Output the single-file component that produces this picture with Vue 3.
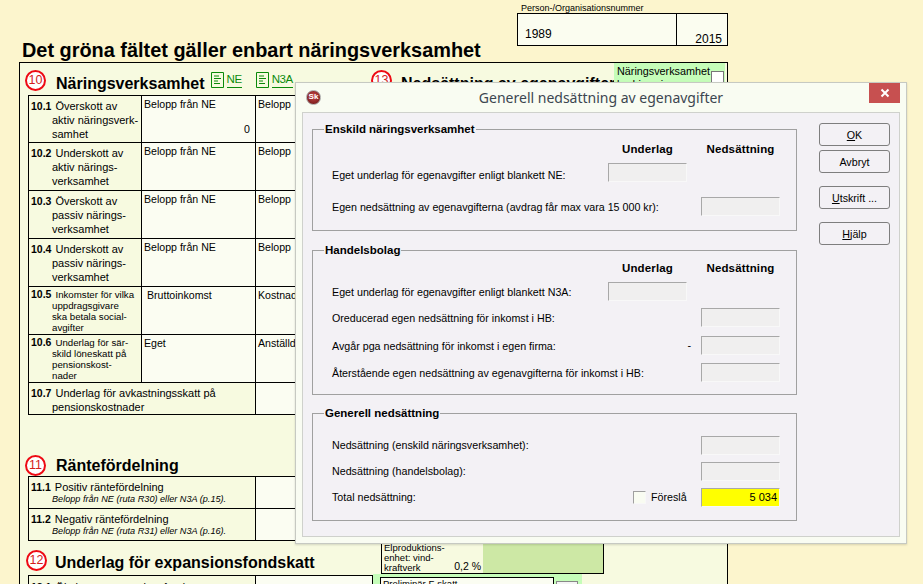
<script setup>
const rows = [
  { n: '10.1', lines: ['Överskott av', 'aktiv näringsverk-', 'samhet'], a: 'Belopp från NE', b: 'Belopp', v: '0', h: 47 },
  { n: '10.2', lines: ['Underskott av', 'aktiv närings-', 'verksamhet'], a: 'Belopp från NE', b: 'Belopp', h: 48 },
  { n: '10.3', lines: ['Överskott av', 'passiv närings-', 'verksamhet'], a: 'Belopp från NE', b: 'Belopp', h: 48 },
  { n: '10.4', lines: ['Underskott av', 'passiv närings-', 'verksamhet'], a: 'Belopp från NE', b: 'Belopp', h: 48 },
  { n: '10.5', small: true, lines: ['Inkomster för vilka', 'uppdragsgivare', 'ska betala social-', 'avgifter'], a: 'Bruttoinkomst', b: 'Kostnad', ind: true, h: 48 },
  { n: '10.6', small: true, lines: ['Underlag för sär-', 'skild löneskatt på', 'pensionskost-', 'nader'], a: 'Eget', b: 'Anställd', h: 48 }
]
const hb = [
  { t: 'Eget underlag för egenavgifter enligt blankett N3A:', col: 1 },
  { t: 'Oreducerad egen nedsättning för inkomst i HB:', col: 2 },
  { t: 'Avgår pga nedsättning för inkomst i egen firma:', col: 2, minus: true },
  { t: 'Återstående egen nedsättning av egenavgifterna för inkomst i HB:', col: 2 }
]
</script>

<template>
  <div class="page">
    <div class="top">
      <h1>Det gröna fältet gäller enbart näringsverksamhet</h1>
      <div class="pnr">
        <div class="pnr-label">Person-/Organisationsnummer</div>
        <div class="pnr-box"><span class="pnr-no">1989</span><span class="pnr-year">2015</span></div>
      </div>
    </div>

    <div class="form">
      <div class="left">
        <div class="head h10">
          <span class="circle">10</span>
          <h2>Näringsverksamhet</h2>
          <span class="doc"><svg width="13" height="16" viewBox="0 0 13 16"><path d="M.5.5h12v15H.5zM3 4h5M3 6.500h7M3 9h4M3 11.500h6" fill="none" stroke="#0a8a0a"/></svg><u>NE</u></span>
          <span class="doc n3a"><svg width="13" height="16" viewBox="0 0 13 16"><path d="M.5.5h12v15H.5zM3 4h5M3 6.500h7M3 9h4M3 11.500h6" fill="none" stroke="#0a8a0a"/></svg><u>N3A</u></span>
        </div>
        <div class="tbl t10">
          <div v-for="r in rows" :key="r.n" class="row" :style="{ height: r.h + 'px' }">
            <div class="lab" :class="{ small: r.small }">
              <b>{{ r.n }}</b>
              <span class="first">{{ r.lines[0] }}</span>
              <span v-for="l in r.lines.slice(1)" :key="l" class="cont">{{ l }}</span>
            </div>
            <div class="cell" :class="{ ind: r.ind }">{{ r.a }}<span v-if="r.v" class="val">{{ r.v }}</span></div>
            <div class="cell last">{{ r.b }}</div>
          </div>
          <div class="row r107">
            <div class="lab wide"><b>10.7</b><span class="first">Underlag för avkastningsskatt på</span><span class="cont">pensionskostnader</span></div>
            <div class="cell last"></div>
          </div>
        </div>

        <div class="head h11">
          <span class="circle">11</span>
          <h2>Räntefördelning</h2>
        </div>
        <div class="tbl t11">
          <div class="row r11">
            <div class="lab wide"><b>11.1</b><span class="first">Positiv räntefördelning</span><i>Belopp från NE (ruta R30) eller N3A (p.15).</i></div>
            <div class="cell last"></div>
          </div>
          <div class="row r11">
            <div class="lab wide"><b>11.2</b><span class="first">Negativ räntefördelning</span><i>Belopp från NE (ruta R31) eller N3A (p.16).</i></div>
            <div class="cell last"></div>
          </div>
        </div>

        <div class="head h12">
          <span class="circle">12</span>
          <h2>Underlag för expansionsfondskatt</h2>
        </div>
        <div class="tbl t12">
          <div class="row r12">
            <div class="lab wide"><b>12.1</b><span class="first">Ökning av expansionsfond</span></div>
            <div class="cell last"></div>
          </div>
        </div>
      </div>

      <div class="right">
        <div class="head h13">
          <span class="circle">13</span>
          <h2>Nedsättning av egenavgifter</h2>
          <div class="nv"><span>Näringsverksamhet</span><span>bedrivs ej</span><span class="cb"></span></div>
        </div>
        <div class="spacer"></div>
        <div class="el">
          <div class="el-txt"><span>Elproduktions-</span><span>enhet: vind-</span><span class="el-last">kraftverk<em>0,2 %</em></span></div>
          <div class="el-fill"></div>
        </div>
        <div class="prelim">
          <div class="prelim-box">Preliminär F-skatt</div>
          <span class="prelim-cb"></span>
        </div>
      </div>
    </div>

    <div class="dialog">
      <div class="titlebar">
        <span class="logo">Sk</span>
        <span class="title">Generell nedsättning av egenavgifter</span>
        <button class="close" aria-label="Stäng"><svg width="10" height="10" viewBox="0 0 10 10"><path d="M1.500 1.500l7 7M8.500 1.500l-7 7" stroke="#fff" stroke-width="2"/></svg></button>
      </div>
      <div class="client">
        <div class="main">
          <fieldset class="fs f1">
            <legend>Enskild näringsverksamhet</legend>
            <div class="cols c-f1"><b>Underlag</b><b>Nedsättning</b></div>
            <div class="line f1a">
              <span class="ltext">Eget underlag för egenavgifter enligt blankett NE:</span>
              <span class="c1"><span class="inp"></span></span>
              <span class="c2"></span>
            </div>
            <div class="line f1b">
              <span class="ltext">Egen nedsättning av egenavgifterna (avdrag får max vara 15 000 kr):</span>
              <span class="c1"></span>
              <span class="c2"><span class="inp"></span></span>
            </div>
          </fieldset>
          <fieldset class="fs f2">
            <legend>Handelsbolag</legend>
            <div class="cols c-f2"><b>Underlag</b><b>Nedsättning</b></div>
            <div v-for="l in hb" :key="l.t" class="line hbl">
              <span class="ltext">{{ l.t }}</span>
              <span class="c1"><span v-if="l.col === 1" class="inp"></span><span v-if="l.minus" class="minus">-</span></span>
              <span class="c2"><span v-if="l.col === 2" class="inp"></span></span>
            </div>
          </fieldset>
          <fieldset class="fs f3">
            <legend>Generell nedsättning</legend>
            <div class="line gl"><span class="ltext">Nedsättning (enskild näringsverksamhet):</span><span class="c2"><span class="inp"></span></span></div>
            <div class="line gl"><span class="ltext">Nedsättning (handelsbolag):</span><span class="c2"><span class="inp"></span></span></div>
            <div class="line gl">
              <span class="ltext">Total nedsättning:</span>
              <span class="foresla"><span class="check"></span>Föreslå</span>
              <span class="c2"><span class="inp yellow">5 034</span></span>
            </div>
          </fieldset>
        </div>
        <div class="buttons">
          <button class="btn"><u>O</u>K</button>
          <button class="btn">Avbryt</button>
          <button class="btn g"><u>U</u>tskrift ...</button>
          <button class="btn g"><u>H</u>jälp</button>
        </div>
      </div>
    </div>
  </div>
</template>

<style>
html, body { margin: 0; padding: 0; }
</style>

<style scoped>
* { box-sizing: border-box; }
.page {
  position: relative;
  width: 923px;
  height: 584px;
  overflow: hidden;
  background: #fcf5cd;
  font-family: "Liberation Sans", Arial, sans-serif;
  color: #000;
}
.top {
  display: flex;
  justify-content: space-between;
  height: 62px;
  padding: 3px 195px 0 22px;
}
h1 {
  margin: 36px 0 0;
  font-size: 19.900px;
  line-height: 22px;
  font-weight: 700;
  white-space: nowrap;
}
.pnr { width: 211px; flex: none; }
.pnr-label { font-size: 9px; line-height: 10px; padding-left: 4px; }
.pnr-box {
  display: flex;
  height: 33px;
  border: 1px solid #000;
  background: #fbfdf0;
  font-size: 12px;
}
.pnr-no { width: 159px; padding: 13px 0 0 7px; border-right: 1px solid #000; }
.pnr-year { flex: 1; text-align: right; padding: 18px 5px 0 0; }

.form {
  display: flex;
  width: 709px;
  height: 522px;
  margin-left: 19px;
  border: 1px solid #000;
  border-bottom: 0;
  background: #f7fae0;
  overflow: hidden;
}
.left { width: 351px; padding-left: 8px; flex: none; }
.right { flex: 1; display: flex; flex-direction: column; min-width: 0; }
.head { display: flex; align-items: center; position: relative; }
h2 { margin: 0; font-size: 16px; font-weight: 700; line-height: 20px; white-space: nowrap; }
.circle {
  flex: none;
  width: 21px;
  height: 21px;
  margin-left: -3px;
  border: 2.500px solid #ee0a14;
  border-radius: 50%;
  background: #fff;
  color: #d41c1c;
  font-size: 12.500px;
  line-height: 16px;
  text-align: center;
  font-weight: 400;
}
.h10 { height: 32px; }
.h10 h2 { margin: 9px 0 0 10px; }
.h10 .circle { margin-top: 2px; }
.doc {
  display: flex;
  align-items: flex-start;
  align-self: flex-start;
  margin: 9px 0 0 6px;
  color: #0a8a0a;
  font-size: 11.500px;
  letter-spacing: -.4px;
  line-height: 15px;
}
.doc u { margin-left: 3px; text-decoration: none; border-bottom: 1px solid #0a8a0a; }
.doc.n3a { margin-left: 14px; }
.doc svg { flex: none; }

.tbl { width: 340px; border: 1px solid #000; background: #fbfdf2; }
.row { display: flex; border-bottom: 1px solid #000; }
.row:last-child { border-bottom: 0; }
.lab {
  width: 113px;
  flex: none;
  background: #f7fae0;
  border-right: 1px solid #000;
  padding: 3px 1px 0 2px;
  font-size: 11px;
  line-height: 14px;
  white-space: nowrap;
}
.lab b { font-size: 10.500px; }
.lab .first { margin-left: 4px; }
.lab .cont { display: block; padding-left: 21px; }
.lab.small { font-size: 9.700px; line-height: 11px; padding-top: 2px; }
.lab.small .cont { padding-left: 21px; }
.cell {
  width: 114px;
  flex: none;
  position: relative;
  border-right: 1px solid #000;
  padding: 2px 0 0 2px;
  font-size: 10.600px;
  line-height: 12px;
  white-space: nowrap;
}
.cell.ind { padding-left: 5px; }
.cell.last { flex: 1; border-right: 0; }
.val { position: absolute; right: 5px; top: 27px; }
.lab.wide { width: 227px; }
.r107 { height: 31px; }
.h11 { height: 29px; margin-top: 32px; }
.h11 h2 { margin: 8px 0 0 10px; }
.h11 .circle { margin-top: 8px; }
.r11 { height: 32px; }
.r11:last-child { height: 31px; }
.r11 i { display: block; padding-left: 21px; font-size: 9.150px; line-height: 11px; }
.r11 .lab { padding-top: 4px; line-height: 13px; }
.h12 { height: 34px; }
.h12 .circle { margin: 4px 0 0 -2px; }
.h12 h2 { margin: 10px 0 0 8px; }
.t12 { width: 345px; height: 20px; }
.t12 .lab { padding-top: 4px; }

.h13 { height: 32px; }
.h13 .circle { margin: 2px 0 0 0; }
.h13 h2 { margin: 9px 0 0 9px; }
.nv {
  position: absolute;
  left: 243px;
  top: 0;
  width: 111px;
  height: 34px;
  background: #c5fdb9;
  font-size: 10.800px;
  line-height: 13px;
  padding: 2px 0 0 3px;
  white-space: nowrap;
}
.nv span { display: block; }
.nv .cb {
  position: absolute;
  left: 97px;
  top: 8px;
  width: 13px;
  height: 14px;
  border: 1px solid #777;
  background: #fff;
}
.spacer { flex: 1; }
.el {
  display: flex;
  flex: none;
  height: 32px;
  margin-left: 10px;
  width: 223px;
  border-left: 1px solid #000;
  border-right: 1px solid #000;
  border-bottom: 1px solid #000;
}
.el-txt { width: 101px; font-size: 9.500px; line-height: 10px; padding: 1px 2px; background: #f7fae0; white-space: nowrap; }
.el-txt span { display: block; }
.el-last { position: relative; }
.el-last em { position: absolute; right: 0; top: -3px; font-style: normal; font-size: 10.500px; line-height: 12px; }
.el-fill { flex: 1; background: #cde8a5; }
.prelim {
  display: flex;
  flex: none;
  align-items: flex-start;
  width: 209px;
  height: 10px;
  margin-left: 2px;
  background: #c5fdb9;
  padding: 3px 0 0 7px;
  overflow: hidden;
}
.prelim-box { width: 174px; height: 12px; flex: none; border: 1px solid #000; background: #fbfdf2; font-size: 9.500px; line-height: 11px; padding-left: 2px; white-space: nowrap; }
.prelim-cb { width: 22px; height: 10px; flex: none; margin: 4px 0 0 2px; border: 1px solid #888; background: #f4f4f4; }

.dialog {
  position: absolute;
  left: 295px;
  top: 82px;
  width: 612px;
  height: 462px;
  background: #f9fcf2;
  border: 1px solid #c6c9c2;
  display: flex;
  flex-direction: column;
  box-shadow: 0 1px 2px rgba(0,0,0,.15);
}
.titlebar { height: 29px; flex: none; display: flex; align-items: center; position: relative; }
.logo {
  position: absolute;
  left: 10px;
  top: 7px;
  width: 15px;
  height: 15px;
  border-radius: 50%;
  border: 1px solid #a9a9a9;
  background: radial-gradient(circle at 50% 40%, #c84a4a, #7c1c1c 80%);
  color: #fff;
  font-size: 8px;
  font-weight: 700;
  line-height: 12px;
  text-align: center;
}
.title { width: 100%; text-align: center; font-family: "Noto Sans", sans-serif; font-size: 14px; color: #3c4650; }
.close {
  position: absolute;
  right: 6px;
  top: 0;
  width: 31px;
  height: 20px;
  padding: 0;
  border: 0;
  background: #c75050;
  display: flex;
  align-items: center;
  justify-content: center;
}
.client {
  flex: 1;
  display: flex;
  margin: 0 6px 6px 6px;
  padding: 10px 0 0 9px;
  background: #f3f1f5;
  border: 1px solid #cfd1cc;
  font-size: 10.700px;
}
.main { width: 485px; flex: none; }
.fs {
  margin: 0;
  padding: 0;
  min-width: 0;
  border: 1px solid #a0a0a0;
}
.fs legend {
  margin-left: 11px;
  padding: 0 1px;
  font-weight: 700;
  font-size: 11.500px;
  line-height: 13px;
}
.f1 { height: 108px; }
.f2 { height: 151px; margin-top: 13px; }
.f3 { height: 114px; margin-top: 12px; }
.cols { display: flex; justify-content: flex-end; margin-right: 16px; font-size: 11.500px; line-height: 13px; letter-spacing: .15px; }
.cols b { width: 79px; text-align: center; flex: none; }
.cols b:first-child { margin-right: 14px; }
.c-f1 { height: 19px; padding-top: 7px; }
.c-f2 { height: 17px; padding-top: 5px; }
.line { display: flex; align-items: center; height: 27px; padding: 0 16px 0 19px; white-space: nowrap; }
.ltext { flex: 1; min-width: 0; width: 0; }
.c1 { width: 93px; display: flex; position: relative; flex: none; }
.c2 { width: 79px; flex: none; display: flex; }
.inp {
  display: block;
  width: 79px;
  height: 19px;
  background: #f0efef;
  border: 1px solid;
  border-color: #a8a8a8 #f8f8f8 #f8f8f8 #a8a8a8;
}
.minus { position: absolute; right: 10px; top: -7px; }
.f1a { margin-top: 4px; }
.f1a .ltext { padding-top: 5px; }
.f1b { margin-top: 7px; }
.hbl:nth-child(3) { margin-top: 4px; }
.hbl:nth-child(4) { margin-top: -1px; }
.hbl:nth-child(5) { margin-top: 1px; }
.gl { height: 26px; }
.f3 legend + .gl { margin-top: 12px; }
.foresla { display: flex; align-items: center; width: 68px; flex: none; }
.check { width: 13px; height: 13px; margin-right: 5px; background: #f9fcf2; border: 1px solid; border-color: #a0a0a0 #f8f8f8 #f8f8f8 #a0a0a0; }
.yellow { background: #ffff00; text-align: right; padding-right: 2px; line-height: 17px; font-size: 11px; }
.buttons { display: flex; flex-direction: column; margin-left: 22px; }
.btn {
  width: 71px;
  height: 23px;
  padding: 0;
  margin-bottom: 4px;
  background: #f3f1f5;
  border: 1px solid #7e7e7e;
  border-radius: 3px;
  font: 10.700px "Liberation Sans", Arial, sans-serif;
  color: #000;
}
.btn.g { margin-top: 9px; }
</style>
